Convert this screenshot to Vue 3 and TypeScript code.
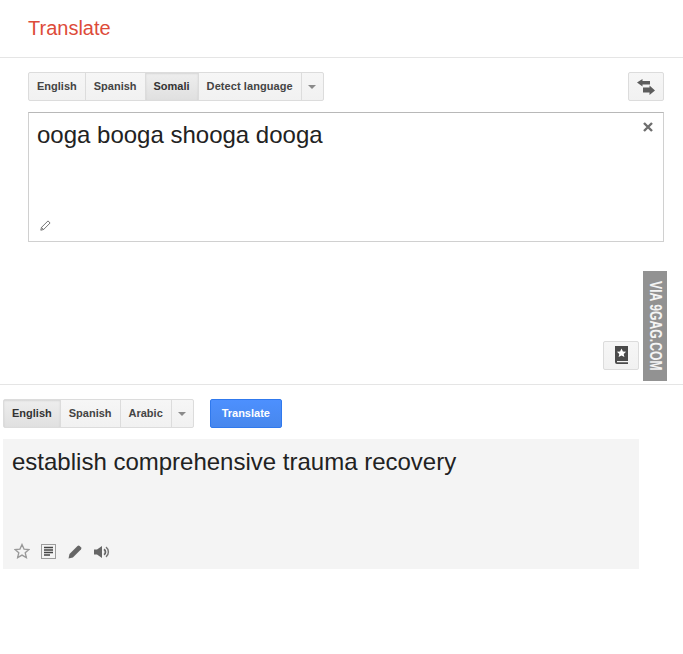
<template>
  <div class="page">
    <header class="header">
      <h1 class="title">Translate</h1>
    </header>

    <section class="source">
      <div class="toolbar">
        <div class="lang-group">
          <button
            v-for="lang in sourceLangs"
            :key="lang"
            class="lang-btn"
            :class="{ active: lang === 'Somali', wide: lang === 'Detect language' }"
          >
            {{ lang }}
          </button>
          <button class="lang-btn more"><span class="caret"></span></button>
        </div>
        <button class="swap-btn" aria-label="Swap languages">
          <svg width="18" height="16" viewBox="0 0 18 16">
            <path d="M0 3.500 5.500 0v2h7.500v3.500H5.500v2z" fill="#5c5c5c" />
            <path d="M18 11.500 12.500 16v-2.500H6V8.500h6.500V6.500z" fill="#5c5c5c" />
          </svg>
        </button>
      </div>

      <div class="input-box">
        <div class="input-text">ooga booga shooga dooga</div>
        <svg class="clear-icon" width="10" height="10" viewBox="0 0 10 10">
          <path d="M1 1l8 8M9 1l-8 8" stroke="#6e6e6e" stroke-width="2.400" />
        </svg>
        <svg class="pencil-icon" width="11" height="11" viewBox="0 0 11 11">
          <path d="M.8 10.200l.7-2.800L8 .9l2.100 2.100-6.500 6.500z M1.500 7.400l2.100 2.100" fill="none" stroke="#666" stroke-width="0.900" />
        </svg>
      </div>

      <div class="saved-row">
        <button class="saved-btn" aria-label="Phrasebook">
          <svg width="13" height="19" viewBox="0 0 13 19">
            <path d="M0 0h13v15H2v1.200h11V18H2a2 2 0 0 1-2-2z" fill="#4a4a4a" />
            <path d="M6.500 2.400l1.400 3 3.200.3-2.400 2.200.7 3.200-2.900-1.700-2.900 1.700.7-3.200-2.400-2.200 3.200-.3z" fill="#fff" />
          </svg>
        </button>
      </div>

      <div class="watermark"><span>VIA 9GAG.COM</span></div>
    </section>

    <section class="target">
      <div class="toolbar target-toolbar">
        <div class="lang-group">
          <button
            v-for="lang in targetLangs"
            :key="lang"
            class="lang-btn"
            :class="{ active: lang === 'English' }"
          >
            {{ lang }}
          </button>
          <button class="lang-btn more"><span class="caret"></span></button>
        </div>
        <button class="translate-btn">Translate</button>
      </div>

      <div class="output-box">
        <div class="output-text">establish comprehensive trauma recovery</div>
        <div class="output-icons">
          <svg width="16" height="16" viewBox="0 0 18 17">
            <path d="M9 1.200l2.300 5.100 5.500.5-4.200 3.700 1.300 5.400L9 13.100l-4.900 2.800 1.300-5.400L1.200 6.800l5.500-.5z" fill="none" stroke="#999" stroke-width="1.500" />
          </svg>
          <svg width="15" height="15" viewBox="0 0 15 15">
            <rect x="0.500" y="0.500" width="14" height="14" fill="none" stroke="#444" stroke-dasharray="1 1" />
            <path d="M3 3.500h9M3 6h9M3 8.500h9M3 11h6" stroke="#444" stroke-width="1.600" />
          </svg>
          <svg class="edit-icon" width="15" height="15" viewBox="0 0 15 15">
            <path d="M0.500 14.500l1-4.400 8-8a1.600 1.600 0 0 1 2.200 0l1.200 1.200a1.600 1.600 0 0 1 0 2.200l-8 8z" fill="#666" />
          </svg>
          <svg class="sound-icon" width="16" height="14" viewBox="0 0 16 14">
            <path d="M0 4.500h3L8 1v12L3 9.500H0z" fill="#666" />
            <path d="M10 4.200a3.400 3.400 0 0 1 0 5.600" fill="none" stroke="#666" stroke-width="1.800" />
            <path d="M12 2.200a6 6 0 0 1 0 9.600" fill="none" stroke="#777" stroke-width="1.500" />
          </svg>
        </div>
      </div>
    </section>
  </div>
</template>

<script setup lang="ts">
const sourceLangs: string[] = ['English', 'Spanish', 'Somali', 'Detect language']
const targetLangs: string[] = ['English', 'Spanish', 'Arabic']
</script>

<style scoped>
.page {
  position: relative;
  width: 683px;
  height: 654px;
  overflow: hidden;
  background: #fff;
  font-family: "Liberation Sans", Arial, sans-serif;
  color: #222;
}

.header {
  height: 57px;
  padding-left: 28px;
  border-bottom: 1px solid #e5e5e5;
}

.title {
  margin: 0;
  padding-top: 17px;
  font-size: 20px;
  line-height: 23px;
  font-weight: 400;
  color: #dd4b39;
}

.source {
  position: relative;
  width: 636px;
  height: 312px;
  padding: 14px 19px 0 28px;
  border-bottom: 1px solid #e5e5e5;
}

.toolbar {
  display: flex;
  justify-content: space-between;
  align-items: center;
  height: 29px;
}

.lang-group {
  display: flex;
  height: 29px;
  box-sizing: border-box;
  border: 1px solid #dcdcdc;
  border-radius: 2px;
  background: linear-gradient(#f6f6f6, #f1f1f1);
}

.lang-btn {
  padding: 0 8px 2px;
  border: 0;
  border-left: 1px solid #dcdcdc;
  background: transparent;
  font-family: inherit;
  font-size: 11px;
  font-weight: 700;
  color: #444;
}

.lang-btn:first-child {
  border-left: 0;
}

.lang-btn.wide {
  letter-spacing: 0.08px;
}

.lang-btn.active {
  background: linear-gradient(#eeeeee, #e0e0e0);
  box-shadow: inset 0 1px 2px rgba(0, 0, 0, 0.1);
  color: #333;
}

.lang-btn.more {
  display: flex;
  align-items: center;
  justify-content: center;
  width: 22px;
  padding: 0;
}

.caret {
  width: 0;
  height: 0;
  border-left: 4px solid transparent;
  border-right: 4px solid transparent;
  border-top: 4px solid #8a8a8a;
}

.swap-btn {
  display: flex;
  align-items: center;
  justify-content: center;
  width: 36px;
  height: 29px;
  padding: 0;
  border: 1px solid #dcdcdc;
  border-radius: 2px;
  background: linear-gradient(#f6f6f6, #f1f1f1);
}

.input-box {
  position: relative;
  box-sizing: border-box;
  height: 130px;
  margin-top: 11px;
  padding: 8px;
  border: 1px solid #d0d0d0;
  border-top-color: #b8b8b8;
}

.input-text,
.output-text {
  font-size: 24px;
  line-height: 28px;
  color: #222;
}

.clear-icon {
  position: absolute;
  top: 9px;
  right: 10px;
}

.pencil-icon {
  position: absolute;
  left: 11px;
  bottom: 10px;
}

.saved-row {
  display: flex;
  justify-content: flex-end;
  margin-top: 99px;
  padding-right: 25px;
}

.saved-btn {
  display: flex;
  align-items: center;
  justify-content: center;
  width: 36px;
  height: 29px;
  padding: 0;
  border: 1px solid #dcdcdc;
  border-radius: 2px;
  background: linear-gradient(#f6f6f6, #f1f1f1);
}

.watermark {
  position: absolute;
  left: 643px;
  top: 213px;
  display: flex;
  align-items: center;
  justify-content: center;
  width: 24px;
  height: 110px;
  background: #929292;
}

.watermark span {
  writing-mode: vertical-rl;
  transform: scaleY(0.76);
  font-size: 16px;
  font-weight: 700;
  white-space: nowrap;
  color: #f4f4f4;
}

.target {
  width: 636px;
  padding: 14px 0 0 3px;
}

.target-toolbar {
  justify-content: flex-start;
  gap: 16px;
}

.translate-btn {
  width: 72px;
  height: 29px;
  padding: 0 0 2px;
  border: 1px solid #3079ed;
  border-radius: 2px;
  background: linear-gradient(#4d90fe, #4787ed);
  font-family: inherit;
  font-size: 11px;
  font-weight: 700;
  color: #fff;
}

.output-box {
  box-sizing: border-box;
  display: flex;
  flex-direction: column;
  justify-content: space-between;
  width: 636px;
  height: 130px;
  margin-top: 11px;
  padding: 9px 9px 10px;
  background: #f4f4f4;
}

.output-icons {
  display: flex;
  align-items: center;
  gap: 11px;
  padding-left: 2px;
}

.edit-icon {
  margin-left: 1px;
}

.sound-icon {
  margin-top: 2px;
}
</style>
